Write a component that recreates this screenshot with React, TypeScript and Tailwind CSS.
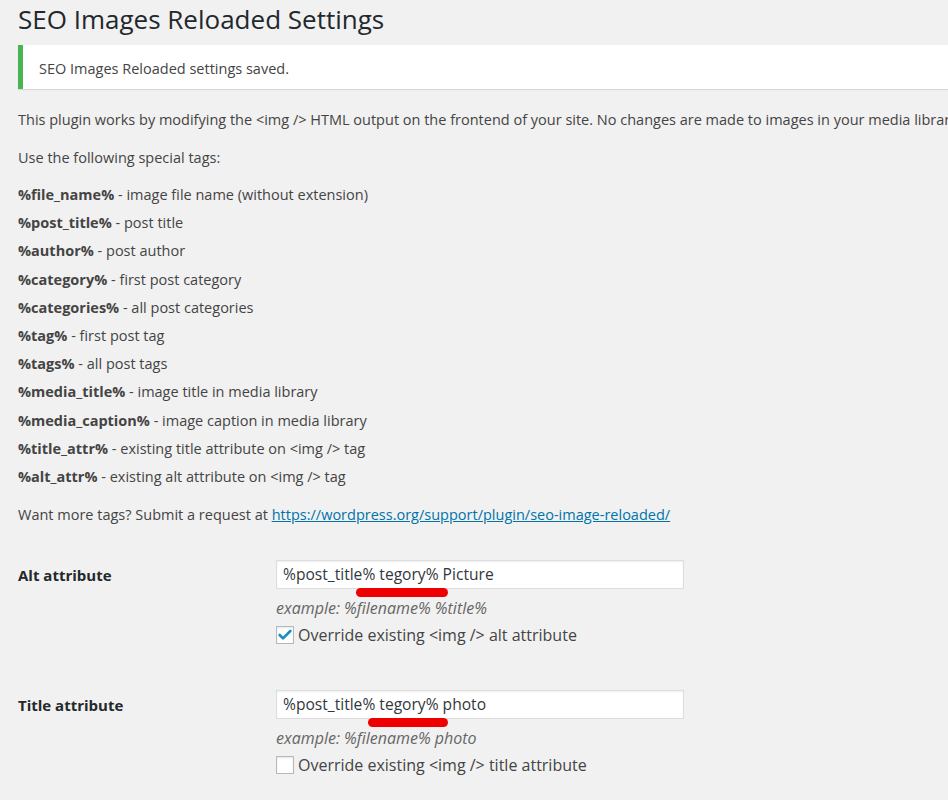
import { Check } from "lucide-react";

const tags: [string, string][] = [
  ["%file_name%", "image file name (without extension)"],
  ["%post_title%", "post title"],
  ["%author%", "post author"],
  ["%category%", "first post category"],
  ["%categories%", "all post categories"],
  ["%tag%", "first post tag"],
  ["%tags%", "all post tags"],
  ["%media_title%", "image title in media library"],
  ["%media_caption%", "image caption in media library"],
  ["%title_attr%", "existing title attribute on <img /> tag"],
  ["%alt_attr%", "existing alt attribute on <img /> tag"],
];

interface FieldRowProps {
  label: string;
  value: string;
  example: string;
  checkLabel: string;
  checked: boolean;
  markLeft: number;
  markWidth: number;
}

const FieldRow = ({ label, value, example, checkLabel, checked, markLeft, markWidth }: FieldRowProps) => {
  return (
    <div className="flex">
      <div className="w-[258px] shrink-0 pt-[3px] text-[15px] font-bold leading-[24px] text-[#23282d]">{label}</div>
      <div className="flex flex-col">
        <div className="relative">
          <div className="flex h-[29px] w-[408px] items-center border border-[#dddddd] bg-white px-[6px] text-[15.6px] text-[#32373c] shadow-[inset_0_1px_2px_rgba(0,0,0,0.07)]">
            {value}
          </div>
          {/* red marker drawn on the screenshot */}
          <div
            className="absolute top-[28px] h-[9px] rounded-full bg-[#ee0000]"
            style={{ left: markLeft, width: markWidth }}
          />
        </div>
        <div className="mt-[7px] text-[16px] italic leading-[24px] text-[#666666]">{example}</div>
        <label className="mt-[3px] flex items-center gap-[4px] text-[16px] leading-[24px] text-[#444444]">
          <span className="flex h-[18px] w-[18px] items-center justify-center border border-[#b4b9be] bg-white shadow-[inset_0_1px_2px_rgba(0,0,0,0.1)]">
            {checked && <Check className="h-[16px] w-[16px] text-[#1e8cbe]" strokeWidth={4} />}
          </span>
          <span>{checkLabel}</span>
        </label>
      </div>
    </div>
  );
};

const App = () => {
  return (
    <div className="min-h-[800px] w-[948px] overflow-hidden bg-[#f1f1f1] pl-[18px] font-['Open_Sans','Noto_Sans',sans-serif] text-[#444444]">
      <h1 className="whitespace-nowrap text-[26px] leading-[38px] text-[#23282d]">SEO Images Reloaded Settings</h1>

      <div className="mt-[7px] flex h-[44px] items-center border-l-[5px] border-[#46b450] bg-white pl-[16px] pt-[4px] text-[14.5px] shadow-[0_1px_1px_rgba(0,0,0,0.1)]">
        SEO Images Reloaded settings saved.
      </div>

      <p className="mt-[17px] whitespace-nowrap text-[14.5px] leading-[28px]">
        This plugin works by modifying the &lt;img /&gt; HTML output on the frontend of your site. No changes are made to images in your media library.
      </p>
      <p className="mt-[10px] text-[14.5px] leading-[28px]">Use the following special tags:</p>

      <div className="mt-[9px] flex flex-col text-[14.5px] leading-[28.2px]">
        {tags.map(([tag, desc]) => (
          <div key={tag}>
            <b className="font-bold">{tag}</b> - {desc}
          </div>
        ))}
      </div>

      <p className="mt-[10px] text-[14.5px] leading-[28px]">
        Want more tags? Submit a request at{" "}
        <a className="text-[#0073aa] underline" href="#">https://wordpress.org/support/plugin/seo-image-reloaded/</a>
      </p>

      <div className="mt-[31px] flex flex-col gap-[43px]">
        <FieldRow
          label="Alt attribute"
          value="%post_title% tegory% Picture"
          example="example: %filename% %title%"
          checkLabel="Override existing <img /> alt attribute"
          checked
          markLeft={80}
          markWidth={92}
        />
        <FieldRow
          label="Title attribute"
          value="%post_title% tegory% photo"
          example="example: %filename% photo"
          checkLabel="Override existing <img /> title attribute"
          checked={false}
          markLeft={92}
          markWidth={80}
        />
      </div>
    </div>
  );
};

export default App;
